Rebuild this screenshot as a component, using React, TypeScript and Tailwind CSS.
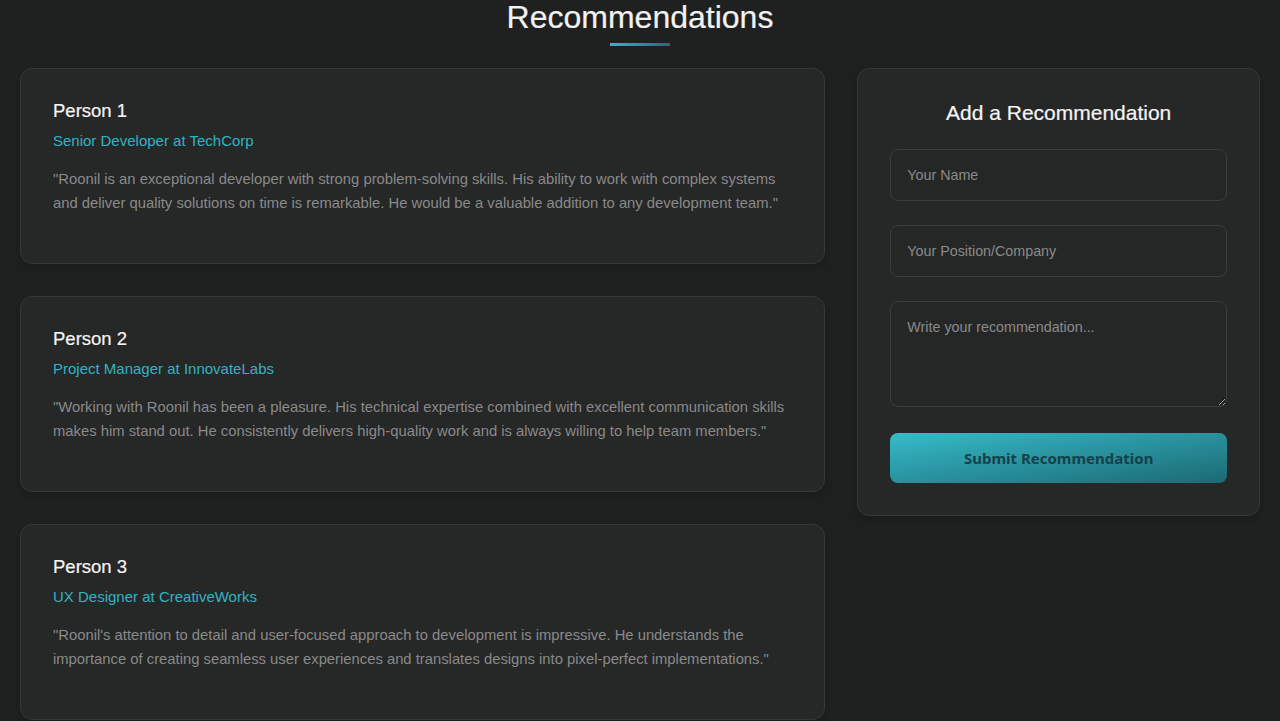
import React from "react";

const recs = [
  {
    name: "Person 1",
    role: "Senior Developer at TechCorp",
    text: "\"Roonil is an exceptional developer with strong problem-solving skills. His ability to work with complex systems and deliver quality solutions on time is remarkable. He would be a valuable addition to any development team.\"",
  },
  {
    name: "Person 2",
    role: "Project Manager at InnovateLabs",
    text: "\"Working with Roonil has been a pleasure. His technical expertise combined with excellent communication skills makes him stand out. He consistently delivers high-quality work and is always willing to help team members.\"",
  },
  {
    name: "Person 3",
    role: "UX Designer at CreativeWorks",
    text: "\"Roonil's attention to detail and user-focused approach to development is impressive. He understands the importance of creating seamless user experiences and translates designs into pixel-perfect implementations.\"",
  },
];

export default function App() {
  return (
    <div
      className="min-h-[721px] w-full bg-[#1f2020] text-[#f0f0f0] overflow-hidden"
      style={{ fontFamily: '"Liberation Sans", Arial, sans-serif' }}
    >
      <div className="flex flex-col items-center">
        <h1 className="mt-[-2px] text-[32px] leading-[38px] font-normal text-[#f2f2f2] [-webkit-text-stroke:0.2px_#f2f2f2]">
          Recommendations
        </h1>
        <div className="mt-[7px] h-[3px] w-[60px] bg-gradient-to-r from-[#35b6c6] to-[#1d6e78]" />
      </div>
      <div className="mt-[22px] grid grid-cols-[2fr_1fr] gap-8 px-5">
        <div className="flex flex-col gap-8">
          {recs.map((r) => (
            <div
              key={r.name}
              className="rounded-xl border border-[#353737] bg-[#262727] p-8 shadow-[0_4px_12px_rgba(0,0,0,0.2)]"
            >
              <h3 className="text-[18.5px] leading-[20px] text-[#f4f4f4] [-webkit-text-stroke:0.2px_#f4f4f4]">
                {r.name}
              </h3>
              <p className="mt-2 text-[15px] leading-[24px] text-[#30b4c4]">{r.role}</p>
              <p className="mt-[14px] mb-4 text-[14.8px] leading-[24px] text-[#8a8a8a]">
                {r.text}
              </p>
            </div>
          ))}
        </div>
        <div className="self-start rounded-xl border border-[#353737] bg-[#262727] p-8 shadow-[0_4px_12px_rgba(0,0,0,0.2)]">
          <h3 className="text-center text-[21px] leading-[24px] text-[#f4f4f4] [-webkit-text-stroke:0.2px_#f4f4f4]">
            Add a Recommendation
          </h3>
          <input
            className="mt-6 block h-[52px] w-full rounded-lg border border-[#3b3d3d] bg-[#252727] px-4 text-[14.3px] text-[#ddd] placeholder:text-[#8a8a8a] outline-none"
            placeholder="Your Name"
          />
          <input
            className="mt-6 block h-[52px] w-full rounded-lg border border-[#3b3d3d] bg-[#252727] px-4 text-[14.3px] text-[#ddd] placeholder:text-[#8a8a8a] outline-none"
            placeholder="Your Position/Company"
          />
          <textarea
            className="mt-6 block h-[106px] w-full rounded-lg border border-[#3b3d3d] bg-[#252727] px-4 pt-[15px] pb-4 text-[14.3px] leading-[20px] text-[#ddd] placeholder:text-[#8a8a8a] outline-none"
            placeholder="Write your recommendation..."
          />
          <button
            className="mt-[26px] block h-[50px] w-full rounded-lg bg-gradient-to-br from-[#36bcca] to-[#1b6a74] text-[15px] font-bold text-[#15414a]"
            style={{ fontFamily: '"Noto Sans", "Open Sans", sans-serif' }}
          >
            Submit Recommendation
          </button>
        </div>
      </div>
    </div>
  );
}
